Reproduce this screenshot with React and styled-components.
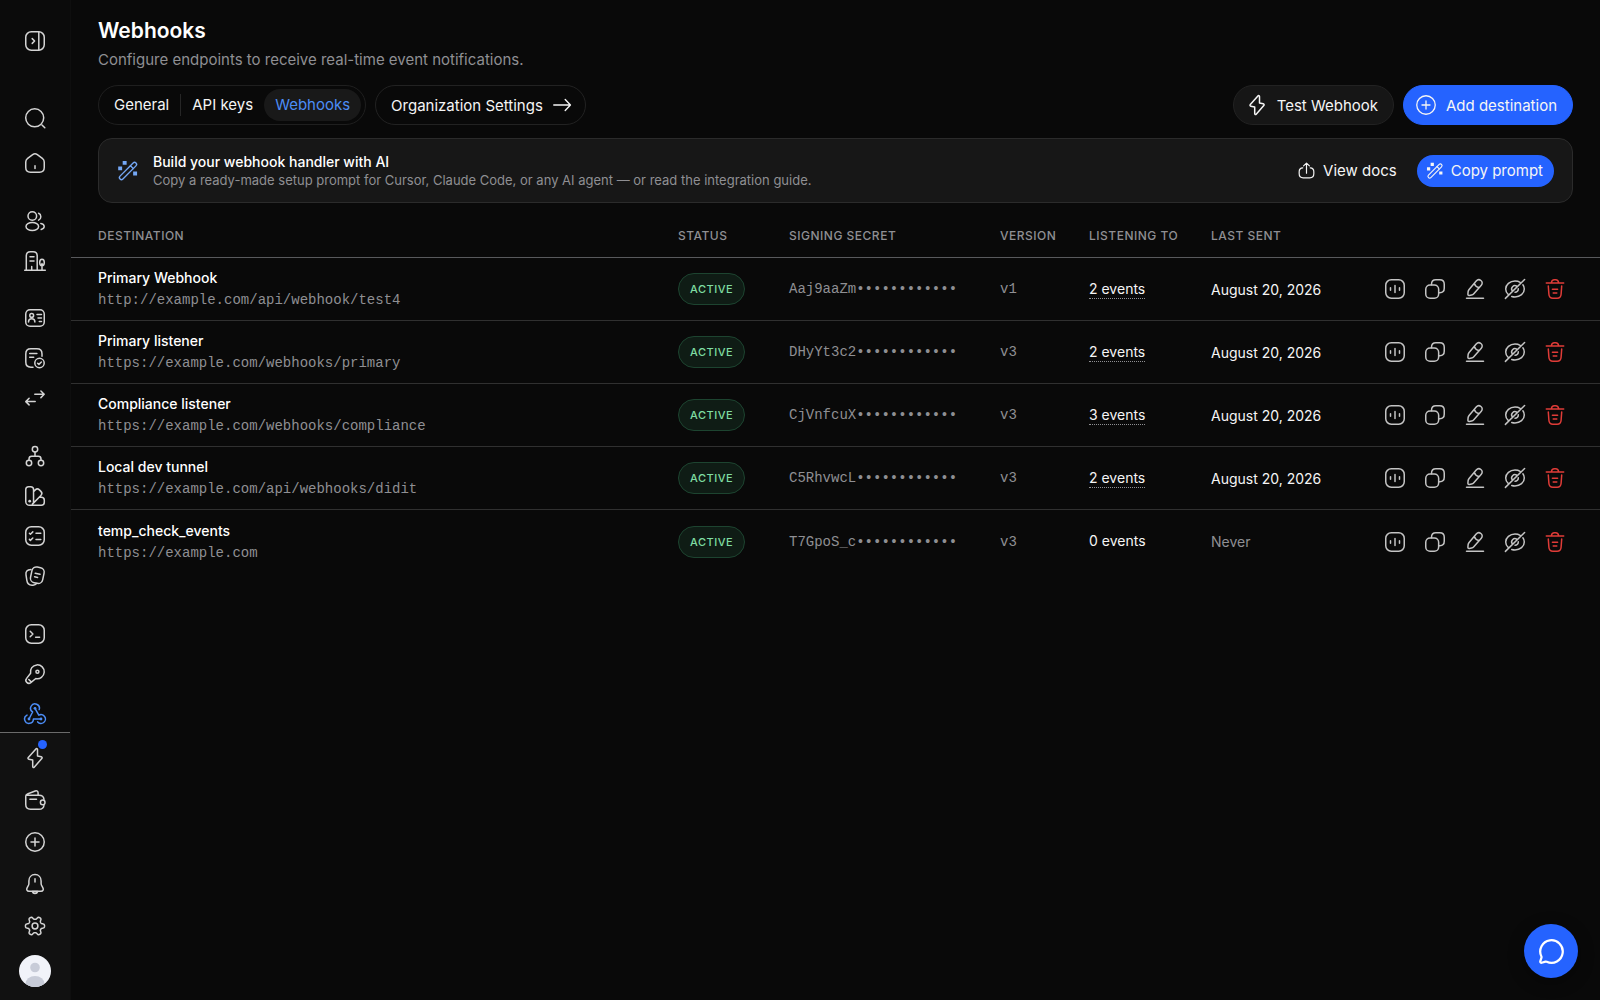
import React from 'react';
import styled, { createGlobalStyle, css } from 'styled-components';

const GlobalStyle = createGlobalStyle`
    *, *::before, *::after {
        box-sizing: border-box;
    }

    body {
        margin: 0;
        background: #090909;
        color: #f5f5f5;
        font-family: Inter, "Liberation Sans", sans-serif;
        font-size: 15px;
        -webkit-font-smoothing: antialiased;
    }

    button {
        font: inherit;
        color: inherit;
        padding: 0;
        border: 0;
        background: none;
        cursor: pointer;
    }

    a {
        color: inherit;
        text-decoration: none;
    }
`;

const Layout = styled.div`
    display: flex;
    align-items: flex-start;
    min-height: 100vh;
`;

/* ---------- icons ---------- */

const Svg = styled.svg`
    display: block;
    flex: none;
    width: ${p => p.$size || 24}px;
    height: ${p => p.$size || 24}px;
    fill: none;
    stroke: currentColor;
    stroke-width: ${p => p.$stroke || 1.5};
    stroke-linecap: round;
    stroke-linejoin: round;

    .solid {
        fill: currentColor;
        stroke: none;
    }
`;

// six-toothed outline for the settings cog
const cogPath = () => {
    const points = [];
    for (let deg = 0; deg < 360; deg += 4) {
        const a = (deg * Math.PI) / 180;
        const r = 8.1 + 1.5 * Math.tanh(2 * Math.cos(6 * a));
        points.push(`${(12 + r * Math.cos(a)).toFixed(2)} ${(12 + r * Math.sin(a)).toFixed(2)}`);
    }
    return `M${points.join('L')}z`;
};

const box = <rect x="2.75" y="2.75" width="18.5" height="18.5" rx="5.5" />;

const icons = {
    panel: <>{box}<path d="M15.8 3v18M9.2 9.6l2.4 2.4-2.4 2.4" /></>,
    search: <><circle cx="11.7" cy="11.8" r="9" /><path d="m19 19 2.8 2.8" /></>,
    home: <path d="M2.75 11c0-1.7.6-2.6 1.9-3.6l5-3.8c1.6-1.2 3.1-1.2 4.7 0l5 3.8c1.3 1 1.9 1.9 1.9 3.6v5.6c0 3.3-1.4 4.7-4.7 4.7h-9.1c-3.3 0-4.7-1.4-4.7-4.7zM12 14.8v2.6" />,
    users: <><circle cx="9.3" cy="7" r="4.3" /><ellipse cx="9.3" cy="17.5" rx="6.3" ry="4" /><path d="M15.6 4.3a3.7 3.7 0 0 1 0 6.8M17.8 14.4c2 .4 3.4 1.6 3.4 3.1s-1.2 2.5-3 3" /></>,
    building: <path d="M1.7 21.3h20.6M3.3 21.3V6.9c0-2.9 1.2-4.1 4.1-4.1h2.7c2.9 0 4.1 1.2 4.1 4.1v14.4M7 7.8h4M7 12h4M8.7 21v-3.4M19 21v-6.5M19 10.3c-1.4 0-2.3 1.4-2.3 3.3s.9 3.2 2.3 3.2 2.3-1.3 2.3-3.2-.9-3.3-2.3-3.3z" />,
    idCard: <><rect x="2.75" y="3.75" width="18.5" height="16.5" rx="4.3" /><circle cx="8.7" cy="9.4" r="1.9" /><path d="M5.5 16c0-2 1.4-3.2 3.2-3.2s3.2 1.2 3.2 3.2M14 8.4h4.5M15 12h3.5M16.3 15.6h2.2" /></>,
    docCheck: <><path d="M10 21.2H7.9c-3.6 0-5.1-1.6-5.1-5.1V7.9c0-3.6 1.5-5.1 5.1-5.1h6c3.6 0 5.1 1.5 5.1 5.1v2.4M6.7 7.6h7.2M6.7 11.2h4" /><circle cx="16.5" cy="17" r="4.7" /><path d="m14.6 17.2 1.3 1.2 2.5-2.4" /></>,
    swap: <path d="M11.8 8.3h9.3M17.9 5l3.3 3.3-3.3 3.3M12.2 15.6H2.9M6.1 12.3l-3.3 3.3 3.3 3.3" />,
    flow: <><circle cx="12" cy="5.2" r="2.7" /><circle cx="6" cy="19" r="2.7" /><circle cx="18" cy="19" r="2.7" /><path d="M12 8v4.2M6 16.2v-1.3c0-1.8.9-2.7 2.7-2.7h6.6c1.8 0 2.7.9 2.7 2.7v1.3" /></>,
    swatch: <><path d="M2.75 5.6c0-1.9 1-2.9 2.9-2.9h2c1.9 0 2.9 1 2.9 2.9v11.8a3.9 3.9 0 0 1-7.8 0zM10.8 7.4l1.5-1.5c1.3-1.3 2.8-1.3 4.1 0l1.5 1.5c1.3 1.3 1.3 2.8 0 4.1l-8.5 8.6M16 13.3h2.3c2 0 3 1 3 3v2c0 2-1 3-3 3H6.8" /><circle className="solid" cx="6.7" cy="17.2" r="1.4" /></>,
    checklist: <>{box}<path d="m6.4 9.3 1 1 2.4-2.4M6.4 15.4l1 1 2.4-2.4M13 9.3h4.8M13 15.4h4.8" /></>,
    notes: <><rect x="8.1" y="3.2" width="12.4" height="16" rx="4.6" transform="rotate(12 14.3 11.2)" /><path d="M8 5.4C4 5.8 2.5 7.3 3 10.8l.8 5.4c.5 3.9 2.5 5.4 6.2 5 1.6-.2 2.8-.7 3.6-1.6M12.2 9.3l4.8 1M11.6 12.7l3 .7" /></>,
    terminal: <>{box}<path d="m7.2 9.3 2.7 2.7-2.7 2.7M12.6 15.2h4" /></>,
    key: <><path d="M7.6 11.3a6.9 6.9 0 1 1 5.2 5.2l-5 4.1c-1.3 1-2.9.9-4-.2s-1.2-2.8-.2-4zM5.8 17.5l2.4 2.4" /><circle cx="14.4" cy="9.7" r="1.5" /></>,
    webhook: <><path d="m6 17 3.6-7a4.4 4.4 0 1 1 6.6-2.4M12 6.3l3.8 6.9a4.4 4.4 0 1 1-1.1 6.7M18 17h-7.6A4.4 4.4 0 1 1 4 13.1" /><circle className="solid" cx="12" cy="6.3" r="1.4" /><circle className="solid" cx="6" cy="17" r="1.4" /><circle className="solid" cx="18" cy="17" r="1.4" /></>,
    bolt: <path d="M12.9 2.9 5.3 11.5c-.6.7-.3 1.6.6 1.8l3.8.8v6.5c0 .9.9 1.2 1.5.6l7.6-8.7c.6-.7.3-1.6-.6-1.8l-3.7-.8V3.5c0-.9-1-1.3-1.6-.6z" />,
    wallet: <><path d="M2.75 8.2v8.4c0 3.2 1.4 4.7 4.7 4.7h8.6c3 0 4.6-1.2 4.9-3.8M21 11.3c-.3-2.7-1.9-4.1-4.9-4.1H4.5c-1 0-1.7.2-1.7.9 0-1.2.8-1.9 2.2-2.4l7.2-2.7c1.7-.6 2.9.1 2.9 1.9v2.2M6.9 11.2h6.6" /><circle cx="19.7" cy="14.4" r="2.3" /></>,
    plusCircle: <><circle cx="12" cy="12" r="9.25" /><path d="M12 8v8M8 12h8" /></>,
    bell: <><path d="M12 2.6c-3.7 0-6.1 2.7-6.1 6.3v2.5c0 1.1-.3 1.8-.9 2.8l-.9 1.6c-1 1.7-.1 3.5 1.9 3.5h12c2 0 2.9-1.8 1.9-3.5l-.9-1.6c-.6-1-.9-1.7-.9-2.8V8.9c0-3.6-2.4-6.3-6.1-6.3zM12 6.7v3.3" /><path d="M9.3 19.5c.4 1.3 1.4 2 2.7 2s2.3-.7 2.7-2z" /></>,
    cog: <><path d={cogPath()} /><circle cx="12" cy="12" r="2.9" /></>,
    arrow: <path d="M3 12h18M15.5 6l5.7 6-5.7 6" />,
    wand: <><rect x="9.8" y="-.3" width="4.4" height="24.6" rx="2.2" transform="rotate(45 12 12)" /><path d="m14.7 6.300 3 3" /><path className="solid" d="M6.200 1h4.300v4.300H6.200zM1.300 7h4.300v4.300H1.300zM17.600 12.500h4.300v4.300h-4.300z" /></>,
    share: <path d="M12 15.5V3M8.3 6.2 12 2.7l3.7 3.5M7.3 8.7c-3.2.2-4.55 1.6-4.55 4.8v2.7c0 3.6 1.5 5.1 5.05 5.1h8.4c3.55 0 5.05-1.5 5.05-5.1v-2.7c0-3.2-1.35-4.6-4.55-4.8" />,
    stats: <>{box}<path d="M7.5 10.7v2.6M12 8.5v7M16.5 10.7v2.6" /></>,
    copy: <><rect x="2.75" y="7.9" width="12.9" height="13.35" rx="4.3" /><path d="M8.5 7.7v-.5c0-3 1.4-4.45 4.4-4.45h3.9c3 0 4.45 1.45 4.45 4.45v4.1c0 3-1.45 4.4-4.45 4.4h-1" /></>,
    edit: <path d="M3.5 21.3h17M13.2 4c1.4-1.6 3.2-1.7 4.7-.5 1.6 1.3 1.7 3.2.4 4.7l-7.5 8.6c-.6.7-1.3 1.1-2.2 1.2l-2.3.4c-.9.2-1.5-.4-1.4-1.3l.2-2.4c.1-.9.4-1.6 1-2.3zM11.3 6.4c.7 2.2 2.4 3.7 4.7 4" />,
    eyeOff: <path d="M2.4 21.4 21.6 2.5M5.4 17.700C3.600 16.200 2.700 14.200 2.700 12c0-4.400 4.200-8 9.300-8 1.900 0 3.700.4 5.100 1.300M19.900 7.800c.9 1.200 1.400 2.700 1.400 4.200 0 4.500-4.200 8-9.300 8-1.200 0-2.300-.2-3.300-.5M9.300 13.900a3.300 3.300 0 0 1 4.500-4.700M15.300 11.700A3.300 3.300 0 0 1 12 15.300" />,
    trash: <path d="M3.3 5.900h17.4M8.400 5.600c.2-2 1.100-2.900 3-2.900h1.200c1.900 0 2.800.9 3 2.900M5.300 9l.6 8.300c.2 2.800 1.400 4 4 4h4.200c2.600 0 3.800-1.200 4-4l.6-8.300M9.400 12.300h5.200M10.200 15.900h3.600" />,
    chat: <path d="M2.992 16.342a2 2 0 0 1 .094 1.167l-1.065 3.29a1 1 0 0 0 1.236 1.168l3.413-.998a2 2 0 0 1 1.099.092 10 10 0 1 0-4.777-4.719" />,
};

const Icon = ({ name, size, stroke }) => (
    <Svg viewBox="0 0 24 24" $size={size} $stroke={stroke} aria-hidden="true">
        {icons[name]}
    </Svg>
);

/* ---------- sidebar ---------- */

const Sidebar = styled.aside`
    position: sticky;
    top: 0;
    flex: none;
    display: flex;
    flex-direction: column;
    width: 71px;
    height: 100vh;
    border-right: 1px solid #0e0e0e;
    background: #0b0b0b;
    color: #d4d4d4;
`;

const Nav = styled.nav`
    flex: 1;
    min-height: 0;
    overflow: hidden;
    padding-top: 21px;
`;

const NavGroup = styled.div`
    display: flex;
    flex-direction: column;
    margin-top: ${p => p.$gap}px;
`;

const itemStyle = css`
    position: relative;
    display: flex;
    align-items: center;
    justify-content: center;
    width: 100%;
    height: ${p => p.$tall ? 42 : 40}px;
    color: ${p => p.$active ? '#4c8df6' : 'inherit'};
`;

const NavLink = styled.a`${itemStyle}`;
const NavButton = styled.button`${itemStyle}`;

const SidebarFooter = styled.div`
    display: flex;
    flex-direction: column;
    align-items: center;
    padding: 4px 0 13px;
    border-top: 1px solid #6b6b6b;
    background: #111111;
`;

const Dot = styled.span`
    position: absolute;
    top: 3px;
    left: 38px;
    width: 9px;
    height: 9px;
    border-radius: 50%;
    background: #2563ff;
`;

const Avatar = styled.button`
    width: 32px;
    height: 32px;
    margin-top: 8px;
    border-radius: 50%;
    overflow: hidden;
`;

const groups = [
    { gap: 0, items: [['panel', 'Expand sidebar']] },
    { gap: 37, items: [['search', 'Search']] },
    { gap: 5, items: [['home', 'Home']] },
    { gap: 18, items: [['users', 'Users'], ['building', 'Businesses']] },
    { gap: 17, items: [['idCard', 'Verifications'], ['docCheck', 'Documents'], ['swap', 'Transactions']] },
    { gap: 18, items: [['flow', 'Workflows'], ['swatch', 'Branding'], ['checklist', 'Questionnaires'], ['notes', 'Lists']] },
    { gap: 18, items: [['terminal', 'Console'], ['key', 'API keys'], ['webhook', 'Webhooks']] },
];

const footerItems = [
    ['bolt', 'Updates'],
    ['wallet', 'Billing'],
    ['plusCircle', 'Create'],
    ['bell', 'Notifications'],
    ['cog', 'Settings'],
];

/* ---------- page ---------- */

const Main = styled.main`
    flex: 1;
    min-width: 0;
    padding-top: 16px;
`;

const Content = styled.div`
    padding: 0 27px;
`;

const PageTitle = styled.h1`
    margin: 0;
    font-size: 21px;
    line-height: 30px;
    font-weight: 600;
    color: #ffffff;
`;

const Subtitle = styled.p`
    margin: 3px 0 0;
    font-size: 15px;
    line-height: 22px;
    color: #8f8f93;
`;

const Toolbar = styled.div`
    display: flex;
    align-items: center;
    gap: 9px;
    margin-top: 14px;
`;

const Tabs = styled.nav`
    display: flex;
    align-items: center;
    height: 40px;
    padding: 0 4px;
    border: 1px solid #1f1f1f;
    border-radius: 20px;
`;

const Tab = styled.a`
    padding: 0 11px;
    border-radius: 16px;
    font-size: 15px;
    line-height: 32px;
    color: ${p => p.$active ? '#4c8df6' : '#f5f5f5'};
    background: ${p => p.$active ? '#191919' : 'transparent'};
`;

const Divider = styled.span`
    width: 1px;
    height: 22px;
    background: #262626;
`;

const Pill = styled.button`
    display: flex;
    align-items: center;
    gap: 8px;
    height: 40px;
    padding: 0 ${p => p.$right || 15}px 0 ${p => p.$left || 11}px;
    border: 1px solid ${p => p.$primary ? '#2563ff' : '#222222'};
    border-radius: 20px;
    font-size: 15px;
    background: ${p => p.$primary ? '#2563ff' : p.$filled ? '#161616' : 'transparent'};
    color: #f5f5f5;
`;

const Spacer = styled.div`
    flex: 1;
`;

const Banner = styled.section`
    display: flex;
    align-items: center;
    gap: 14px;
    min-height: 65px;
    margin-top: 13px;
    padding: 0 18px;
    border: 1px solid #2b2b2b;
    border-radius: 14px;
    background: #171717;
`;

const BannerIcon = styled.span`
    color: #74a7f5;
`;

const BannerText = styled.div`
    flex: 1;
    min-width: 0;
`;

const BannerTitle = styled.h2`
    margin: 0;
    font-size: 14px;
    line-height: 18px;
    font-weight: 500;
    color: #ffffff;
`;

const BannerNote = styled.p`
    margin: 0;
    font-size: 13px;
    line-height: 18px;
    color: #8f8f93;
`;

const DocsLink = styled.a`
    display: flex;
    align-items: center;
    gap: 7px;
    font-size: 15px;
`;

const CopyButton = styled.button`
    display: flex;
    align-items: center;
    gap: 7px;
    height: 32px;
    padding: 0 11px 0 9px;
    margin-left: 6px;
    border-radius: 16px;
    font-size: 15px;
    background: #2563ff;
`;

/* ---------- table ---------- */

const Table = styled.table`
    width: 100%;
    margin-top: 12px;
    table-layout: fixed;
    border-collapse: separate;
    border-spacing: 0;
`;

const Col = styled.col`
    width: ${p => p.$width ? `${p.$width}px` : 'auto'};
`;

const Th = styled.th`
    padding: 12px 0;
    border-bottom: 1px solid #58595c;
    text-align: left;
    font-size: 12px;
    line-height: 18px;
    font-weight: 500;
    letter-spacing: 0.5px;
    text-transform: uppercase;
    color: #8f8f93;

    &:first-child {
        padding-left: 27px;
    }
`;

const Row = styled.tr`
    &:not(:last-child) td {
        border-bottom: 1px solid #303030;
    }
`;

const Td = styled.td`
    height: 63px;
    padding: 0;
    font-size: 14px;
    white-space: nowrap;
    color: ${p => p.$muted ? '#8f8f93' : '#f5f5f5'};

    &:first-child {
        padding-left: 27px;
    }

    &:last-child {
        padding-right: 27px;
    }
`;

const Name = styled.div`
    font-weight: 500;
    line-height: 22px;
    color: #ffffff;
`;

const Mono = styled.span`
    display: block;
    font-family: "Liberation Mono", monospace;
    font-size: 14px;
    line-height: 22px;
    color: #8f8f93;
`;

const Status = styled.span`
    display: inline-flex;
    align-items: center;
    height: 32px;
    padding: 0 11px;
    border: 1px solid #1d4430;
    border-radius: 16px;
    font-size: 11px;
    font-weight: 500;
    letter-spacing: 0.5px;
    text-transform: uppercase;
    background: #0f1c15;
    color: #7fdca2;
`;

const Events = styled.span`
    display: inline-block;
    line-height: 18px;
    border-bottom: 1px ${p => p.$underlined ? 'dotted #8f8f93' : 'solid transparent'};
`;

const Actions = styled.div`
    display: flex;
    justify-content: flex-end;
    gap: 4px;
`;

const IconButton = styled.button`
    display: flex;
    align-items: center;
    justify-content: center;
    width: 36px;
    height: 36px;
    color: ${p => p.$danger ? '#e03c38' : '#c4c4c4'};
`;

const ChatButton = styled.button`
    position: fixed;
    right: 22px;
    bottom: 22px;
    display: flex;
    align-items: center;
    justify-content: center;
    width: 54px;
    height: 54px;
    border-radius: 50%;
    background: #2563ff;
    color: #ffffff;
    box-shadow: 0 4px 16px rgba(0, 0, 0, 0.4);
`;

const columns = [
    ['Destination'],
    ['Status', 111],
    ['Signing secret', 211],
    ['Version', 89],
    ['Listening to', 122],
    ['Last sent', 166],
];

const webhooks = [
    { name: 'Primary Webhook', url: 'http://example.com/api/webhook/test4', secret: 'Aaj9aaZm', version: 'v1', events: 2, sent: 'August 20, 2026' },
    { name: 'Primary listener', url: 'https://example.com/webhooks/primary', secret: 'DHyYt3c2', version: 'v3', events: 2, sent: 'August 20, 2026' },
    { name: 'Compliance listener', url: 'https://example.com/webhooks/compliance', secret: 'CjVnfcuX', version: 'v3', events: 3, sent: 'August 20, 2026' },
    { name: 'Local dev tunnel', url: 'https://example.com/api/webhooks/didit', secret: 'C5RhvwcL', version: 'v3', events: 2, sent: 'August 20, 2026' },
    { name: 'temp_check_events', url: 'https://example.com', secret: 'T7GpoS_c', version: 'v3', events: 0, sent: null },
];

const actions = [
    ['stats', 'View deliveries'],
    ['copy', 'Copy secret'],
    ['edit', 'Edit'],
    ['eyeOff', 'Disable'],
    ['trash', 'Delete'],
];

const WebhookRow = ({ hook }) => (
    <Row>
        <Td>
            <Name>{hook.name}</Name>
            <Mono>{hook.url}</Mono>
        </Td>
        <Td><Status>Active</Status></Td>
        <Td><Mono>{hook.secret}{'•'.repeat(12)}</Mono></Td>
        <Td><Mono>{hook.version}</Mono></Td>
        <Td><Events $underlined={hook.events > 0}>{hook.events} events</Events></Td>
        <Td $muted={!hook.sent}>{hook.sent || 'Never'}</Td>
        <Td>
            <Actions>
                {actions.map(([icon, label]) => (
                    <IconButton key={icon} aria-label={label} $danger={icon === 'trash'}>
                        <Icon name={icon} />
                    </IconButton>
                ))}
            </Actions>
        </Td>
    </Row>
);

const SideNav = () => (
    <Sidebar>
        <Nav>
            {groups.map(({ gap, items }) => (
                <NavGroup key={items[0][0]} $gap={gap}>
                    {items.map(([icon, label]) => (
                        icon === 'panel' || icon === 'search'
                            ? <NavButton key={icon} aria-label={label}><Icon name={icon} /></NavButton>
                            : <NavLink key={icon} href="#" aria-label={label} $active={icon === 'webhook'}><Icon name={icon} /></NavLink>
                    ))}
                </NavGroup>
            ))}
        </Nav>
        <SidebarFooter>
            {footerItems.map(([icon, label]) => (
                <NavButton key={icon} aria-label={label} $tall>
                    <Icon name={icon} />
                    {icon === 'bolt' && <Dot />}
                </NavButton>
            ))}
            <Avatar aria-label="Account">
                <svg width="32" height="32" viewBox="0 0 32 32" display="block">
                    <rect width="32" height="32" fill="#f1f3f9" />
                    <circle cx="16" cy="12.5" r="4.8" fill="#c8ccd8" />
                    <ellipse cx="16" cy="29" rx="9.5" ry="8" fill="#c8ccd8" />
                </svg>
            </Avatar>
        </SidebarFooter>
    </Sidebar>
);

const App = () => (
    <Layout>
        <GlobalStyle />
        <SideNav />
        <Main>
            <Content>
                <PageTitle>Webhooks</PageTitle>
                <Subtitle>Configure endpoints to receive real-time event notifications.</Subtitle>
                <Toolbar>
                    <Tabs>
                        <Tab href="#">General</Tab>
                        <Divider />
                        <Tab href="#">API keys</Tab>
                        <Tab href="#" $active>Webhooks</Tab>
                    </Tabs>
                    <Pill as="a" href="#" $left={15} $right={12}>
                        Organization Settings
                        <Icon name="arrow" size={22} />
                    </Pill>
                    <Spacer />
                    <Pill $filled>
                        <Icon name="bolt" />
                        Test Webhook
                    </Pill>
                    <Pill $primary $left={10}>
                        <Icon name="plusCircle" stroke={1.3} />
                        Add destination
                    </Pill>
                </Toolbar>
                <Banner>
                    <BannerIcon><Icon name="wand" size={22} /></BannerIcon>
                    <BannerText>
                        <BannerTitle>Build your webhook handler with AI</BannerTitle>
                        <BannerNote>Copy a ready-made setup prompt for Cursor, Claude Code, or any AI agent — or read the integration guide.</BannerNote>
                    </BannerText>
                    <DocsLink href="#">
                        <Icon name="share" size={19} />
                        View docs
                    </DocsLink>
                    <CopyButton>
                        <Icon name="wand" size={18} />
                        Copy prompt
                    </CopyButton>
                </Banner>
            </Content>
            <Table>
                <colgroup>
                    {columns.map(([label, width]) => <Col key={label} $width={width} />)}
                    <Col $width={223} />
                </colgroup>
                <thead>
                    <tr>
                        {columns.map(([label]) => <Th key={label} scope="col">{label}</Th>)}
                        <Th as="td" />
                    </tr>
                </thead>
                <tbody>
                    {webhooks.map(hook => <WebhookRow key={hook.name} hook={hook} />)}
                </tbody>
            </Table>
        </Main>
        <ChatButton aria-label="Open chat">
            <Icon name="chat" size={27} stroke={2} />
        </ChatButton>
    </Layout>
);

export default App;
